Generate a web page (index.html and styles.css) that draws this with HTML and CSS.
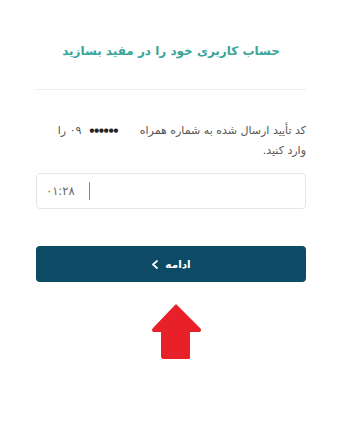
FILE: index.html
```html
<!DOCTYPE html>
<html lang="fa" dir="rtl">
<head>
  <meta charset="UTF-8" />
  <meta name="viewport" content="width=device-width, initial-scale=1.0" />
  <title>ورود به مفید</title>
  <link rel="stylesheet" href="styles.css">
</head>
<body>
  <div class="container">
    <h1>حساب کاربری خود را در مفید بسازید</h1>
    <hr class="divider">
    <p class="hint">کد تأیید ارسال شده به شماره همراه <span class="mask">●●●●●●</span>۰۹ را وارد کنید.</p>
    <div class="code-box">
      <input type="text" class="code">
      <span class="sep"></span>
      <span class="timer">۰۱:۲۸</span>
    </div>
    <button class="next">ادامه
      <svg width="8" height="9" viewBox="0 0 8 9"><path d="M6 1 L2 4.5 L6 8" fill="none" stroke="#fff" stroke-width="1.8" stroke-linecap="round" stroke-linejoin="round"/></svg>
    </button>
    <div class="pointer">
      <svg width="52" height="58" viewBox="0 0 52 58"><path d="M24 2 Q25 0.5 26 2 L49 25 Q51 27 49 29 L39 29 L39 55 Q39 56 38 56 L12 56 Q11 56 10 54 L10 29 L2 29 Q0 27 2 25 Z" fill="#e8202a"/></svg>
    </div>
  </div>
</body>
</html>
```

FILE: styles.css
```css
body {
  font-family: "DejaVu Sans", sans-serif;
  background: #ffffff;
  margin: 0;
  padding: 0;
}
.container {
  padding: 41px 36px 0;
}
h1 {
  text-align: center;
  color: #3aa597;
  font-size: 12px;
  font-weight: bold;
  margin: 0;
  line-height: 20px;
}
.divider {
  border: none;
  border-top: 1px solid #ececec;
  margin: 28px 0 0;
}
.hint {
  color: #555;
  font-size: 11px;
  line-height: 20px;
  margin: 30px 0 0;
}
.mask {
  font-size: 5.5px;
  letter-spacing: 2px;
  margin: 0 18px 0 8px;
  color: #222;
  vertical-align: 2px;
}
.code-box {
  margin-top: 12px;
  height: 34px;
  border: 1px solid #e6e6e6;
  border-radius: 4px;
  display: flex;
  align-items: center;
  padding: 0 9px;
}
.code {
  flex: 1;
  border: none;
  outline: none;
  background: transparent;
  font-size: 13px;
}
.sep {
  width: 1px;
  height: 18px;
  background: #888;
  margin: 0 14px;
}
.timer {
  color: #666;
  font-size: 11.5px;
  direction: ltr;
}
.next {
  display: flex;
  align-items: center;
  justify-content: center;
  gap: 6px;
  width: 100%;
  height: 36px;
  margin-top: 37px;
  background: #0c4a66;
  color: #fff;
  border: none;
  border-radius: 4px;
  font-family: "DejaVu Sans", sans-serif;
  font-size: 10.5px;
  font-weight: bold;
}
.pointer {
  display: flex;
  justify-content: center;
  padding-left: 12px;
  margin-top: 21px;
}
```
